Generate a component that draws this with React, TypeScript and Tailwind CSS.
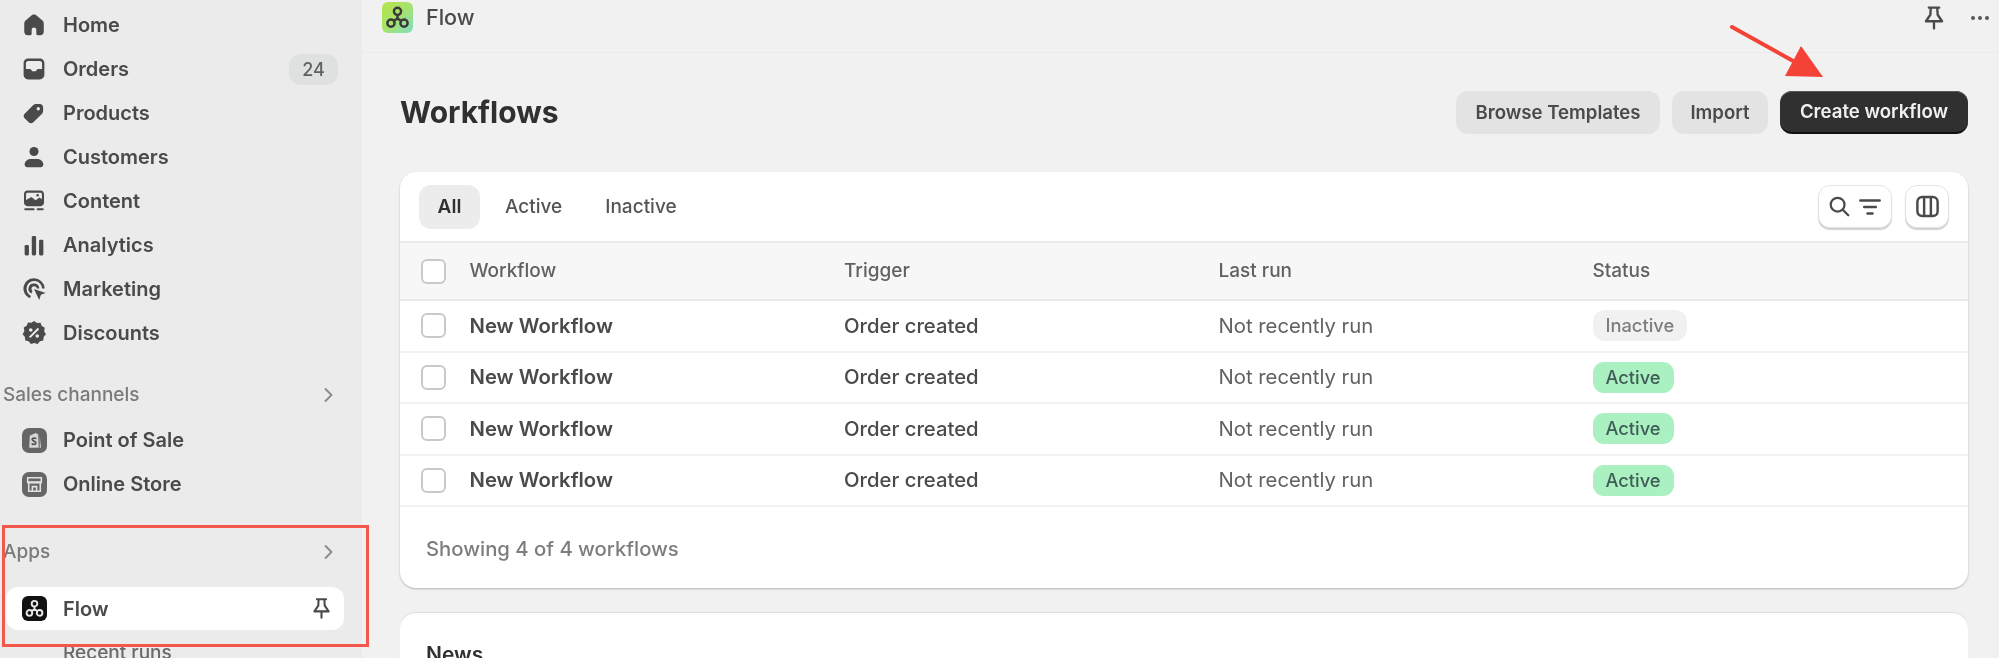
import type { ReactNode } from "react";

const font = "font-['Inter',sans-serif]";

function Icon({ children, className = "w-[26px] h-[26px] text-[#4a4a4a]" }: { children: ReactNode; className?: string }) {
  return (
    <svg viewBox="0 0 20 20" fill="currentColor" className={className}>
      {children}
    </svg>
  );
}

const navItems: { label: string; badge?: string; icon: ReactNode }[] = [
  {
    label: "Home",
    icon: <path fillRule="evenodd" d="M10 2c-.9 0-1.700.4-2.400 1L3.700 6.300C2.900 7 2.500 7.900 2.500 9v6.200c0 1.500 1.100 2.600 2.500 2.600h2.200c.6 0 1-.4 1-1v-3.100c0-1 .8-1.700 1.800-1.700s1.800.8 1.800 1.700v3.100c0 .6.4 1 1 1H15c1.400 0 2.500-1.100 2.500-2.600V9c0-1.100-.4-2-1.200-2.700L12.400 3c-.7-.6-1.500-1-2.400-1z" />,
  },
  {
    label: "Orders",
    badge: "24",
    icon: <path fillRule="evenodd" d="M5.500 2C3.600 2 2 3.600 2 5.500v9C2 16.400 3.600 18 5.500 18h9c1.900 0 3.500-1.600 3.500-3.500v-9C18 3.600 16.400 2 14.500 2h-9zM3.800 5.500c0-.9.800-1.700 1.700-1.700h9c.9 0 1.700.8 1.700 1.700V10h-2.700c-.8 0-1.300.4-1.600 1l-.4.800H8.500l-.4-.8c-.3-.6-.8-1-1.600-1H3.800V5.500z" />,
  },
  {
    label: "Products",
    icon: <path fillRule="evenodd" d="M11.500 3c-.8 0-1.500.3-2 .8L2.800 10.500c-1 1-1 2.600 0 3.600l3.100 3.100c1 1 2.600 1 3.600 0l6.700-6.700c.5-.5.8-1.200.8-2V5.500C17 4.100 15.900 3 14.500 3h-3zM13.300 8a1.300 1.300 0 100-2.600 1.300 1.300 0 000 2.600z" />,
  },
  {
    label: "Customers",
    icon: (
      <>
        <circle cx="10" cy="5.800" r="3.500" />
        <path d="M2.800 15.800c0-2.800 2.400-4.300 5.200-4.300h4c2.800 0 5.200 1.500 5.200 4.300 0 1.200-.9 2-2 2H4.800c-1.100 0-2-.8-2-2z" />
      </>
    ),
  },
  {
    label: "Content",
    icon: (
      <>
        <path fillRule="evenodd" d="M5 2C3.400 2 2.300 3.200 2.300 4.800v6.400c0 1.600 1.100 2.800 2.700 2.800h10c1.600 0 2.700-1.200 2.700-2.800V4.800C17.700 3.200 16.600 2 15 2H5zM3.900 8.200V4.800c0-.7.500-1.200 1.100-1.200h10c.6 0 1.100.5 1.100 1.200v3.900l-1.900-1.400-3 2.100-3.200-2.500-4.100 2.300z" />
        <circle cx="12.800" cy="5.600" r="1" />
        <rect x="2.500" y="15.500" width="8" height="1.600" rx=".8" />
        <rect x="12" y="15.500" width="5.500" height="1.600" rx=".8" />
      </>
    ),
  },
  {
    label: "Analytics",
    icon: (
      <>
        <rect x="2.800" y="10" width="3.300" height="8" rx="1" />
        <rect x="8.300" y="3" width="3.300" height="15" rx="1" />
        <rect x="13.900" y="6" width="3.300" height="12" rx="1" />
      </>
    ),
  },
  {
    label: "Marketing",
    icon: (
      <>
        <path d="M10 1.800a8 8 0 00-3.200 15.400l.8-1.900A6 6 0 1116.200 9.600h2A8.200 8.200 0 0010 1.800z" />
        <path d="M10 5.800a4 4 0 00-2 7.600l.8-1.800A2.100 2.100 0 1112.200 9.600h1.900A4.200 4.200 0 0010 5.800z" />
        <path d="M10 10l9 3-3.700 1.500L14 18.500z" />
      </>
    ),
  },
  {
    label: "Discounts",
    icon: (
      <path fillRule="evenodd" d="M10 .8l2.300 1.500 2.700-.2 1 2.500 2.300 1.400-.5 2.700 1.400 2.300-1.800 2-.3 2.700-2.600.7-1.700 2.100-2.600-.9-2.600.9-1.700-2.100-2.600-.7-.3-2.700-1.800-2L2.600 8.500l-.5-2.700 2.300-1.400 1-2.500 2.700.2L10 .8zM7.500 6.300a1.400 1.400 0 100 2.800 1.400 1.400 0 000-2.800zm5 4.600a1.400 1.400 0 100 2.800 1.400 1.400 0 000-2.800zM12.900 6l-6.800 6.800 1.100 1.100L14 7.100 12.900 6z" />
    ),
  },
];

function FlowGlyph({ className }: { className: string }) {
  return (
    <svg viewBox="0 0 24 24" fill="none" stroke="currentColor" strokeWidth="2.200" className={className}>
      <circle cx="12" cy="6.500" r="3.200" />
      <circle cx="6.200" cy="17" r="3.200" />
      <circle cx="17.800" cy="17" r="3.200" />
      <path d="M12 9.700v3.300M12 13l-3 1.700M12 13l3 1.700" />
    </svg>
  );
}

function PinIcon({ className }: { className: string }) {
  return (
    <svg viewBox="0 0 20 20" fill="none" stroke="currentColor" strokeWidth="1.800" strokeLinejoin="round" strokeLinecap="round" className={className}>
      <path d="M6 2h8M7.500 2l-.3 5.500L3.800 12.500h12.400l-3.400-5L12.500 2M10 12.500V18" />
    </svg>
  );
}

function Chevron() {
  return (
    <svg viewBox="0 0 20 20" fill="none" stroke="currentColor" strokeWidth="1.800" strokeLinecap="round" strokeLinejoin="round" className="w-[20px] h-[20px] text-[#8a8a8a]">
      <path d="M7.500 4l6 6-6 6" />
    </svg>
  );
}

function Sidebar() {
  return (
    <aside className="w-[362px] shrink-0 h-full bg-[#ebebeb] pt-[3px] text-[#4a4a4a]">
      {navItems.map((item) => (
        <div key={item.label} className="h-[44px] flex items-center pl-[21px] pr-[24px]">
          <Icon>{item.icon}</Icon>
          <span className="ml-[16px] text-[20px] font-semibold flex-1">{item.label}</span>
          {item.badge && (
            <span className="w-[49px] h-[31px] rounded-[12px] bg-[#dfe1e0] flex items-center justify-center text-[18px] font-medium text-[#616161]">
              {item.badge}
            </span>
          )}
        </div>
      ))}
      <div className="mt-[18px] h-[44px] flex items-center justify-between pl-[3px] pr-[24px]">
        <span className="text-[19px] font-medium text-[#7a7a7a]">Sales channels</span>
        <Chevron />
      </div>
      <div className="mt-[1px] h-[44px] flex items-center pl-[22px]">
        <span className="w-[25px] h-[25px] rounded-[7px] bg-[#666666] flex items-center justify-center">
          <svg viewBox="0 0 20 20" className="w-[21px] h-[21px]">
            <path d="M5.500 5.500L11 2.800l2.500 1.200.5 13H5z" fill="#d6d6d6" />
            <path d="M15 6l1.200 11H15z" fill="#d6d6d6" />
            <path d="M11.500 8.500c-.5-1-3.500-1.300-3.700.5-.2 2 3.700 1.300 3.500 3.500-.2 1.700-3.300 1.500-3.800.3" fill="none" stroke="#555555" strokeWidth="1.700" />
          </svg>
        </span>
        <span className="ml-[16px] text-[20px] font-semibold">Point of Sale</span>
      </div>
      <div className="h-[44px] flex items-center pl-[22px]">
        <span className="w-[25px] h-[25px] rounded-[7px] bg-[#666666] flex items-center justify-center">
          <svg viewBox="0 0 20 20" className="w-[21px] h-[21px]" fill="none" stroke="#e0e0e0" strokeWidth="1.500">
            <path d="M3.500 3.500h13v4.500h-13z" />
            <path d="M4.500 8v8.500h11V8" />
            <path d="M8 16.500V12h4v4.500" />
            <path d="M3.500 8h13" strokeWidth="2" />
          </svg>
        </span>
        <span className="ml-[16px] text-[20px] font-semibold">Online Store</span>
      </div>
      <div className="mt-[24px] h-[44px] flex items-center justify-between pl-[3px] pr-[24px]">
        <span className="text-[19px] font-medium text-[#7a7a7a]">Apps</span>
        <Chevron />
      </div>
      <div className="mt-[13px] ml-[6px] w-[338px] h-[43px] bg-white rounded-[12px] flex items-center pl-[16px] pr-[11px]">
        <span className="w-[25px] h-[25px] rounded-[6px] bg-[#111111] flex items-center justify-center text-[#e8e8e8]">
          <FlowGlyph className="w-[21px] h-[21px]" />
        </span>
        <span className="ml-[16px] text-[20px] font-semibold flex-1">Flow</span>
        <PinIcon className="w-[23px] h-[23px] text-[#4a4a4a]" />
      </div>
      <div className="mt-[12px] pl-[63px] text-[19px] font-medium text-[#6a6a6a] leading-[22px]">Recent runs</div>
    </aside>
  );
}

const rows = ["Inactive", "Active", "Active", "Active"];

function Checkbox() {
  return <span className="block ml-[21px] w-[25px] h-[25px] rounded-[6px] bg-white border-2 border-[#c9c9c9]" />;
}

function WorkflowsCard() {
  return (
    <section className="mt-[38px] bg-white rounded-[16px] shadow-[0_1px_2px_rgba(0,0,0,0.25)] overflow-hidden">
      <div className="h-[69px] flex items-center pl-[19px] pr-[19px] text-[19px] font-medium text-[#555555]">
        <span className="w-[61px] h-[44px] rounded-[12px] bg-[#ececec] flex items-center justify-center pt-[2px] font-semibold text-[#303030]">All</span>
        <span className="ml-[25px] pt-[2px]">Active</span>
        <span className="ml-[43px] pt-[2px]">Inactive</span>
        <span className="ml-auto w-[74px] h-[43px] rounded-[12px] bg-white border border-[#e3e3e3] shadow-[0_2px_1px_rgba(0,0,0,0.18)] flex items-center justify-center gap-[5px] text-[#4a4a4a]">
          <svg viewBox="0 0 20 20" fill="none" stroke="currentColor" strokeWidth="1.800" strokeLinecap="round" className="w-[25px] h-[25px]">
            <circle cx="8.500" cy="8.500" r="5.500" />
            <path d="M12.800 12.800l4.200 4.200" />
          </svg>
          <svg viewBox="0 0 20 20" fill="none" stroke="currentColor" strokeWidth="1.800" strokeLinecap="round" className="w-[26px] h-[26px]">
            <path d="M2.500 5h15M5.500 10h9M8 15h4" />
          </svg>
        </span>
        <span className="ml-[13px] w-[44px] h-[43px] rounded-[12px] bg-white border border-[#e3e3e3] shadow-[0_2px_1px_rgba(0,0,0,0.18)] flex items-center justify-center text-[#4a4a4a]">
          <svg viewBox="0 0 20 20" fill="none" stroke="currentColor" strokeWidth="1.800" className="w-[27px] h-[27px]">
            <rect x="2.500" y="3" width="15" height="14" rx="3.500" />
            <path d="M7.500 3v14M12.500 3v14" />
          </svg>
        </span>
      </div>
      <div className="h-[60px] grid grid-cols-[69.500px_374.500px_374.500px_374px_1fr] items-center bg-[#f7f7f7] border-y-2 border-[#ebebeb] text-[19px] font-medium text-[#616161]">
        <Checkbox />
        <span>Workflow</span>
        <span>Trigger</span>
        <span>Last run</span>
        <span>Status</span>
      </div>
      {rows.map((status, i) => (
        <div key={i} className="h-[51.500px] grid grid-cols-[69.500px_374.500px_374.500px_374px_1fr] items-center border-b-2 border-[#f1f1f1] text-[20.300px] text-[#4a4a4a]">
          <Checkbox />
          <span className="font-semibold">New Workflow</span>
          <span className="font-medium">Order created</span>
          <span className="text-[#616161]">Not recently run</span>
          <span>
            {status === "Active" ? (
              <span className="inline-flex items-center h-[31px] px-[13px] rounded-[11px] bg-[#aaf0c0] text-[18.300px] font-medium text-[#3f5d56]">Active</span>
            ) : (
              <span className="inline-flex items-center h-[31px] px-[13px] rounded-[12px] bg-[#f1f1f1] text-[18.300px] font-medium text-[#7d7d7d]">Inactive</span>
            )}
          </span>
        </div>
      ))}
      <div className="h-[81px] flex items-center pl-[26px] pt-[3px] text-[20.300px] font-medium text-[#7d7d7d]">Showing 4 of 4 workflows</div>
    </section>
  );
}

export default function App() {
  return (
    <div className={`relative w-[1999px] h-[658px] overflow-hidden flex bg-[#f1f1f1] blur-[0.6px] ${font}`}>
      <Sidebar />
      <main className="flex-1 min-w-0">
        <header className="h-[53px] flex items-center border-b border-[#ebebeb] pl-[20px] pr-[10px] pb-[18px] pt-[1px]">
          <span className="w-[31px] h-[31px] rounded-[6px] bg-gradient-to-br from-[#b5e34a] via-[#a6e36a] to-[#7fdcc0] flex items-center justify-center text-[#3a3a3a]">
            <FlowGlyph className="w-[27px] h-[27px]" />
          </span>
          <span className="ml-[13px] text-[21.500px] font-medium text-[#4a4a4a]">Flow</span>
          <PinIcon className="ml-auto w-[26px] h-[26px] text-[#4a4a4a]" />
          <span className="ml-[24px] flex gap-[3px]">
            <i className="w-[4px] h-[4px] rounded-full bg-[#555555]" />
            <i className="w-[4px] h-[4px] rounded-full bg-[#555555]" />
            <i className="w-[4px] h-[4px] rounded-full bg-[#555555]" />
          </span>
        </header>
        <div className="pl-[38px] pr-[31px]">
          <div className="mt-[38px] h-[43px] flex items-center justify-between">
            <h1 className="text-[30px] font-bold text-[#303030]">Workflows</h1>
            <div className="flex items-center gap-[12px] text-[18.600px] font-semibold">
              <button className="w-[204px] h-[43px] rounded-[12px] bg-[#e3e3e3] text-[#4a4a4a]">Browse Templates</button>
              <button className="w-[96px] h-[43px] rounded-[12px] bg-[#e3e3e3] text-[#4a4a4a]">Import</button>
              <button className="w-[188px] h-[43px] rounded-[12px] bg-[#303030] border-b-2 border-[#111111] shadow-[inset_0_1px_0_#5a5a5a] text-[#f0f0f0]">Create workflow</button>
            </div>
          </div>
          <WorkflowsCard />
          <section className="mt-[25px] h-[120px] bg-white rounded-[16px] pl-[26px] pt-[26px] shadow-[0_-1px_1px_rgba(0,0,0,0.08)]">
            <h2 className="text-[21px] font-semibold text-[#303030]">News</h2>
          </section>
        </div>
      </main>
      <div className="absolute left-[2px] top-[525px] w-[367px] h-[122px] border-[3px] border-[#f4574c]" />
      <svg className="absolute left-[1725px] top-[20px] w-[105px] h-[62px]" viewBox="0 0 105 62" fill="#f44336">
        <path d="M7 7L70 42" stroke="#f44336" strokeWidth="4" strokeLinecap="round" />
        <path d="M76 26L98 57L60 56z" />
      </svg>
    </div>
  );
}
